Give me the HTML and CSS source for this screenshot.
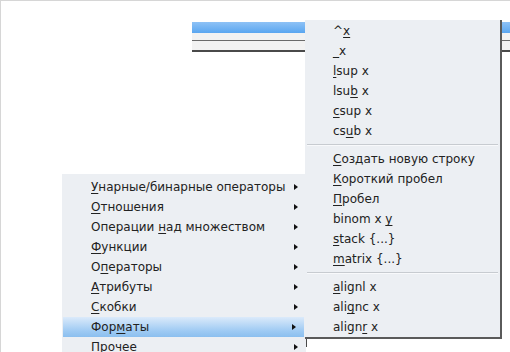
FILE: index.html
```html
<!DOCTYPE html>
<html lang="ru">
<head>
  <meta charset="UTF-8" />
  <title>Контекстное меню формулы</title>
  <link rel="stylesheet" href="styles.css">
</head>
<body>
  <div class="frame">
    <div class="toolbar">
      <div class="toolbar-strip"></div>
      <div class="toolbar-rule"></div>
      <div class="toolbar-rule dark"></div>
    </div>

    <ul class="menu main-menu">
      <li class="item"><span><u>У</u>нарные/бинарные операторы</span><i class="arrow"></i></li>
      <li class="item"><span><u>О</u>тношения</span><i class="arrow"></i></li>
      <li class="item"><span>Операции <u>н</u>ад множеством</span><i class="arrow"></i></li>
      <li class="item"><span><u>Ф</u>ункции</span><i class="arrow"></i></li>
      <li class="item"><span>О<u>п</u>ераторы</span><i class="arrow"></i></li>
      <li class="item"><span><u>А</u>трибуты</span><i class="arrow"></i></li>
      <li class="item"><span><u>С</u>кобки</span><i class="arrow"></i></li>
      <li class="item active"><span>Фор<u>м</u>аты</span><i class="arrow"></i></li>
      <li class="item"><span>Прочее</span><i class="arrow"></i></li>
    </ul>

    <ul class="menu sub-menu">
      <li class="item"><span>^<u>x</u></span></li>
      <li class="item"><span><u>_</u>x</span></li>
      <li class="item"><span><u>l</u>sup x</span></li>
      <li class="item"><span>lsu<u>b</u> x</span></li>
      <li class="item"><span><u>c</u>sup x</span></li>
      <li class="item"><span>cs<u>u</u>b x</span></li>
      <li class="sep"></li>
      <li class="item"><span><u>С</u>оздать новую строку</span></li>
      <li class="item"><span><u>К</u>ороткий пробел</span></li>
      <li class="item"><span><u>П</u>робел</span></li>
      <li class="item"><span>binom x <u>y</u></span></li>
      <li class="item"><span><u>s</u>tack {...}</span></li>
      <li class="item"><span><u>m</u>atrix {...}</span></li>
      <li class="sep"></li>
      <li class="item"><span><u>a</u>lignl x</span></li>
      <li class="item"><span>ali<u>g</u>nc x</span></li>
      <li class="item"><span>align<u>r</u> x</span></li>
    </ul>
    <div class="corner-tick"></div>
  </div>
</body>
</html>
```

FILE: styles.css
```css
* { margin: 0; padding: 0; box-sizing: border-box; }
body {
  font-family: 'DejaVu Sans', sans-serif;
  font-size: 12px;
  color: #222;
  background: #fff;
  overflow: hidden;
}
.frame {
  position: relative;
  width: 510px; height: 352px;
  border-top: 1px solid #d6d6d6; border-left: 1px solid #d6d6d6;
}

/* strip of the document window behind the menus */
.toolbar { margin: 21px 0 0 191px; }
.toolbar-strip { height: 11px; background: linear-gradient(#8ec2f6, #5aa6f0); }
.toolbar-rule { height: 8px; background: #f2f2f2; border-bottom: 1px solid #6a6a6a; }
.toolbar-rule.dark { height: 11px; border-bottom: 2px solid #4a4a4a; }

/* popup menus */
.menu {
  position: absolute;
  list-style: none;
  background: #eceff3;
}
.main-menu { left: 61px; top: 173px; width: 244px; padding: 3px 0 0 1px; }
.sub-menu {
  left: 304px; top: 19px; width: 197px;
  padding: 1px 0 0;
  border-right: 2px solid #5a5a5a; border-bottom: 2px solid #5a5a5a;
}
.item {
  display: flex; align-items: center; justify-content: space-between;
  height: 20px; padding: 0 8px 0 28px;
  white-space: nowrap;
}
.sub-menu .item { padding-left: 28px; }
.item u { text-underline-offset: 2px; }
.item.active { background: linear-gradient(#dbeafa, #9ecaf3 70%, #8bbfef); margin-right: 2px; }
.arrow {
  width: 0; height: 0;
  border-top: 3.5px solid transparent; border-bottom: 3.5px solid transparent;
  border-left: 4px solid #111;
}
.sep { height: 8px; padding: 3px 2px 0; }
.sep::before { content: ''; display: block; height: 1px; background: #c7cbd0; border-bottom: 1px solid #f8f9fb; }

.corner-tick {
  position: absolute; left: 305px; top: 338px;
  width: 1px; height: 8px; background: #4a4a4a;
}
```
